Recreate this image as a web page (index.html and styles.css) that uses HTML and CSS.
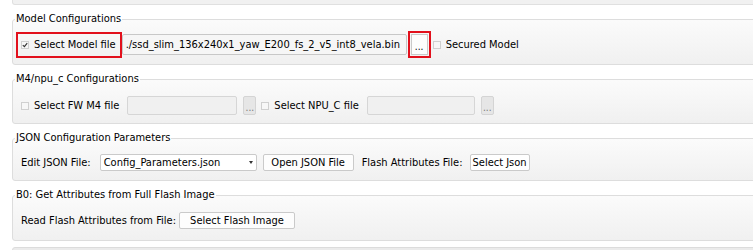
FILE: index.html
```html
<!DOCTYPE html>
<html>
<head>
<meta charset="utf-8">
<link rel="stylesheet" href="styles.css">
</head>
<body>
<div class="page">
  <div class="stub"></div>

  <fieldset class="group g1">
    <legend>Model Configurations</legend>
    <div class="row">
      <label class="check marked"><span class="box checked"><svg width="6" height="6" viewBox="0 0 6 6"><path d="M0.8 3.2 L2.4 4.7 L5.2 1.2" fill="none" stroke="#333" stroke-width="1.1"/></svg></span><span>Select Model file</span></label>
      <div class="field model-path">./ssd_slim_136x240x1_yaw_E200_fs_2_v5_int8_vela.bin</div>
      <button class="btn dots marked">...</button>
      <label class="check secured"><span class="box"></span><span>Secured Model</span></label>
    </div>
  </fieldset>

  <fieldset class="group g2">
    <legend>M4/npu_c Configurations</legend>
    <div class="row">
      <label class="check"><span class="box"></span><span>Select FW M4 file</span></label>
      <div class="field off fw"></div>
      <button class="btn dots off">...</button>
      <label class="check npu"><span class="box"></span><span>Select NPU_C file</span></label>
      <div class="field off npuf"></div>
      <button class="btn dots off">...</button>
    </div>
  </fieldset>

  <fieldset class="group g3">
    <legend>JSON Configuration Parameters</legend>
    <div class="row">
      <span class="lbl edit">Edit JSON File:</span>
      <div class="combo"><span class="combo-text">Config_Parameters.json</span><span class="arrow"></span></div>
      <button class="btn small open">Open JSON File</button>
      <span class="lbl flash">Flash Attributes File:</span>
      <button class="btn small white">Select Json</button>
    </div>
  </fieldset>

  <fieldset class="group g4">
    <legend>B0: Get Attributes from Full Flash Image</legend>
    <div class="row">
      <span class="lbl">Read Flash Attributes from File:</span>
      <button class="btn small img">Select Flash Image</button>
    </div>
  </fieldset>

  <div class="foot"></div>
</div>
</body>
</html>
```
FILE: styles.css
```css
html, body {
  margin: 0;
  background: #ffffff;
  overflow: hidden;
}
body {
  font-family: "DejaVu Sans Condensed", "DejaVu Sans", sans-serif;
  font-stretch: condensed;
  font-size: 11px;
  color: #000000;
}
.page {
  padding-left: 12px;
  margin-right: -20px;
}
.stub {
  height: 5px;
  margin-top: -1px;
  border: 1px solid #e0e0e0;
  border-top: none;
  border-radius: 0 0 3px 3px;
  background: #f1f1f1;
}
.group {
  margin: 7px 0 0;
  padding: 7px 8px 6px 7px;
  border: 1px solid #dddddd;
  border-radius: 3px;
  background: linear-gradient(#fbfbfb, #f0f0f0);
  min-width: 0;
}
.group legend {
  margin-left: -5px;
  padding: 0 1px;
  height: 14px;
  line-height: 14px;
}
.g1 { padding-top: 7px; padding-bottom: 8px; }
.g2 { padding-top: 8px; padding-bottom: 6px; }
.g3 { padding-top: 6px; padding-bottom: 6px; }
.g4 { padding-top: 7px; padding-bottom: 8px; }
.row {
  display: flex;
  align-items: center;
  height: 23px;
}
.check {
  display: flex;
  align-items: center;
  gap: 5px;
  height: 18px;
  padding: 0 2px 0 1px;
  white-space: nowrap;
}
.box {
  width: 6px;
  height: 6px;
  border: 1px solid #d0d0d0;
  background: #f7f7f7;
  display: flex;
  align-items: center;
  justify-content: center;
}
.box svg { display: block; }
.marked {
  outline: 2px solid #e2101c;
  outline-offset: 2px;
  border-radius: 0;
}
.field {
  box-sizing: border-box;
  height: 21px;
  border: 1px solid #c8c8c8;
  border-radius: 2px;
  background: #f6f6f6;
  padding: 0 3px;
  display: flex;
  align-items: center;
  white-space: nowrap;
}
.model-path { margin-left: 4px; width: 285px; }
.btn {
  font: inherit;
  color: inherit;
  box-sizing: border-box;
  margin: 0;
  border: 1px solid #cacaca;
  border-radius: 2px;
  background: #fdfdfd;
  padding: 0 3px;
  display: flex;
  align-items: center;
  justify-content: center;
  white-space: nowrap;
}
.dots {
  width: 17px;
  height: 21px;
  padding: 0;
  margin-left: 4px;
  font-size: 10px;
  padding-top: 3px;
}
.dots.marked { border-radius: 0; outline-offset: 1px; }
.secured { margin-left: 4px; }
.field.off {
  height: 19px;
  background: #f0f0f0;
  border-color: #d6d6d6;
}
.fw { margin-left: 6px; width: 110px; }
.npuf { margin-left: 6px; width: 108px; }
.dots.off {
  width: 13px;
  height: 19px;
  margin-left: 6px;
  background: #e6e6e6;
  border-color: #d4d4d4;
  color: #777;
}
.npu { margin-left: 4px; }
.lbl {
  padding-left: 1px;
  white-space: nowrap;
}
.edit { padding-right: 4px; }
.combo {
  box-sizing: border-box;
  margin-left: 5px;
  width: 157px;
  height: 17px;
  border: 1px solid #cacaca;
  border-radius: 2px;
  background: #ffffff;
  display: flex;
  align-items: center;
  padding-left: 3px;
}
.combo-text { flex: 1; }
.arrow {
  width: 0;
  height: 0;
  margin-right: 3px;
  border-left: 2px solid transparent;
  border-right: 2px solid transparent;
  border-top: 3px solid #333;
}
.small { height: 17px; }
.open { margin-left: 6px; width: 91px; }
.flash { margin-left: 7px; }
.white { margin-left: 7px; width: 60px; background: #ffffff; }
.img { margin-left: 3px; width: 116px; }
.foot {
  margin-top: 6px;
  height: 20px;
  border: 1px solid #dcdcdc;
  border-radius: 3px;
  background: #ebebeb;
}
```
